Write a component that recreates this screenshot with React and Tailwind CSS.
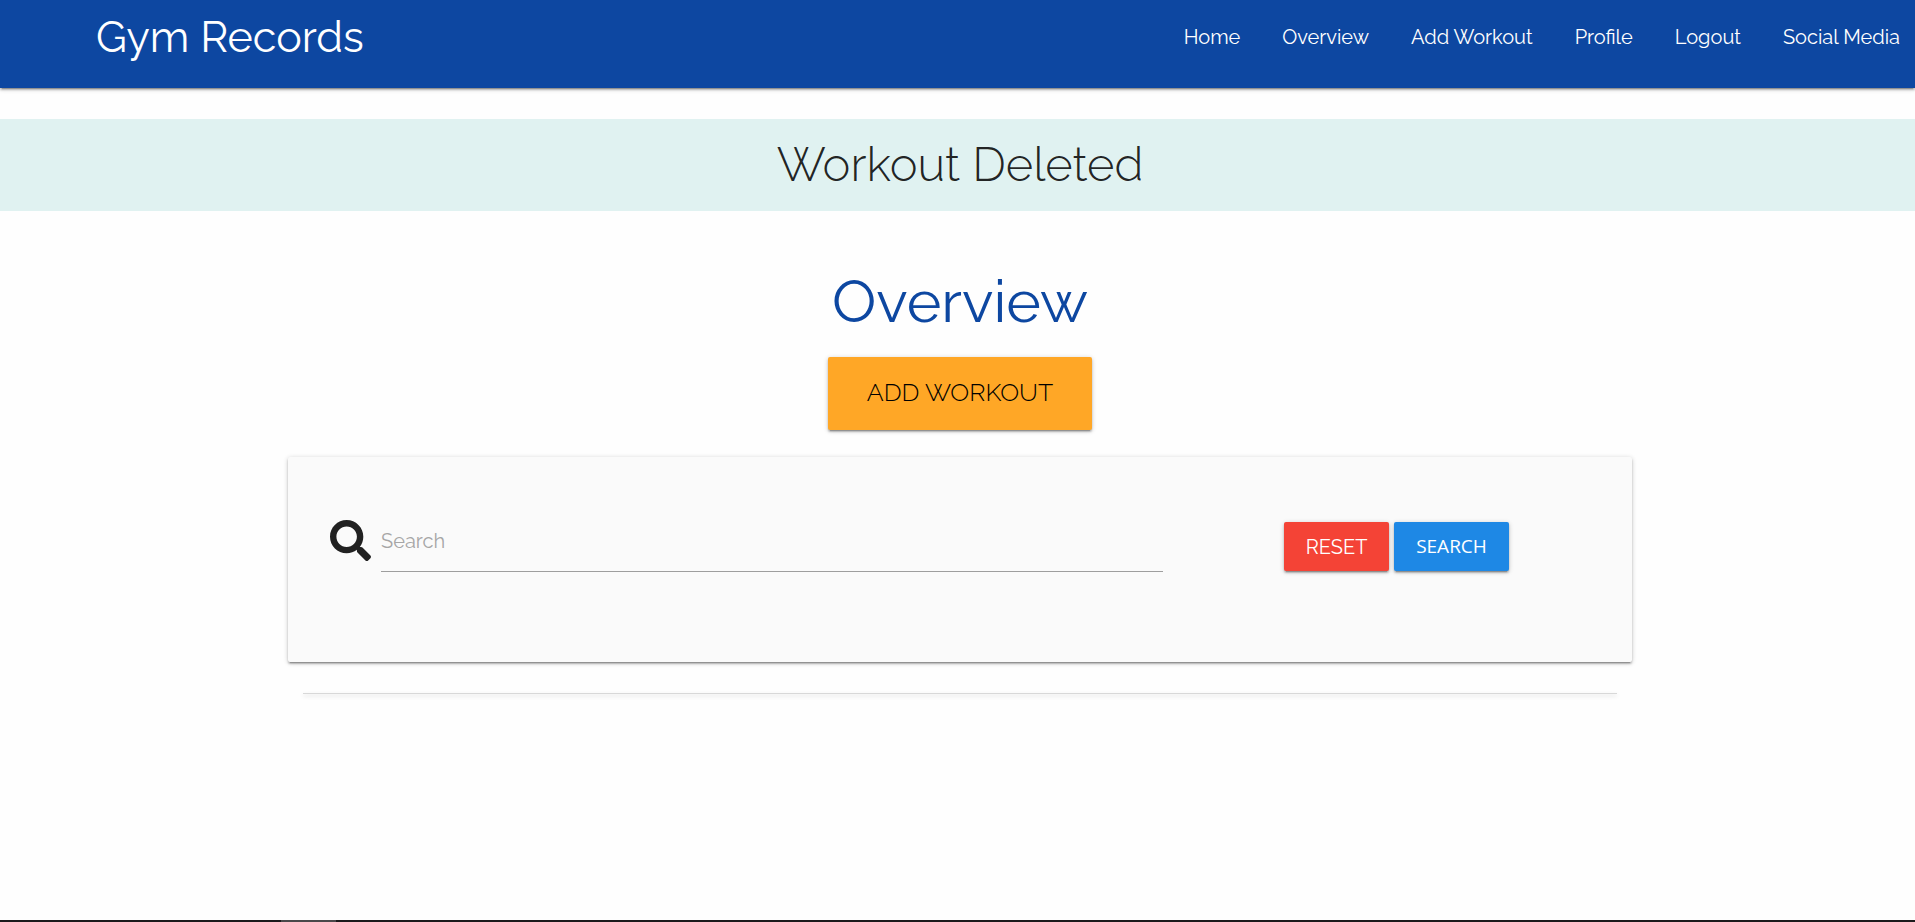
import { FaSearch } from "react-icons/fa";

const links = ["Home", "Overview", "Add Workout", "Profile", "Logout", "Social Media"];

const raised =
  "shadow-[0_2px_2px_0_rgba(0,0,0,0.2),0_3px_1px_-2px_rgba(0,0,0,0.2),0_1px_5px_0_rgba(0,0,0,0.2)]";

export default function App() {
  return (
    <div className="flex min-h-screen flex-col bg-[#fefefe] font-['Raleway','Lato',sans-serif] text-black/87">
      <nav className={`flex h-[88px] items-start justify-between bg-[#0d47a1] pl-24 pr-[15px] text-white ${raised}`}>
        <a href="#" className="text-[43px] leading-[74px]">Gym Records</a>
        <ul className="flex gap-[42px]">
          {links.map((label) => (
            <li key={label}>
              <a href="#" className="text-xl leading-[74px]">{label}</a>
            </li>
          ))}
        </ul>
      </nav>

      <h4 className="mt-[31px] h-[92px] bg-[#e0f2f1] pl-[5px] text-center text-[47px] font-light leading-[92px]">
        Workout Deleted
      </h4>

      <main className="flex grow flex-col items-center pl-[5px]">
        <h3 className="mt-[58px] text-[59px] leading-[66px] text-[#0d47a1]">Overview</h3>
        <a
          href="#"
          className={`mt-[22px] h-[73px] w-[264px] rounded-[2px] bg-[#ffa726] text-center text-[25px] font-light leading-[71px] text-black ${raised}`}
        >
          ADD WORKOUT
        </a>

        <div className="mt-[27px] w-full max-w-[1344px]">
          <form className={`flex h-[205px] rounded-[2px] bg-[#fafafa] pl-[42px] pt-[63px] ${raised}`}>
            <label htmlFor="query" aria-label="Search" className="w-[51px]">
              <FaSearch className="size-[41px] text-[#212121]" />
            </label>
            <input
              id="query"
              type="text"
              placeholder="Search"
              className="h-[52px] w-[782px] border-b border-[#9e9e9e] bg-transparent pb-2.5 text-xl outline-none placeholder:text-[#a6a6a6]"
            />
            <div className="ml-[121px] mt-[2px] flex h-[49px] gap-[5px] text-white">
              <button type="reset" className={`w-[105px] rounded-[2px] bg-[#f44336] text-xl ${raised}`}>RESET</button>
              <button type="submit" className={`w-[115px] rounded-[2px] bg-[#1e88e5] font-['Open_Sans',sans-serif] text-[19px] ${raised}`}>SEARCH</button>
            </div>
          </form>
          <div className="mx-[15px] mt-[31px] h-px bg-[#d8d8d8] shadow-[0_2px_4px_0_rgba(0,0,0,0.2)]" />
        </div>
      </main>

      <div className="h-[2px] bg-[#1b191b] pl-[281px]">
        <div className="h-full w-[55px] bg-[#4a484a]" />
      </div>
    </div>
  );
}
